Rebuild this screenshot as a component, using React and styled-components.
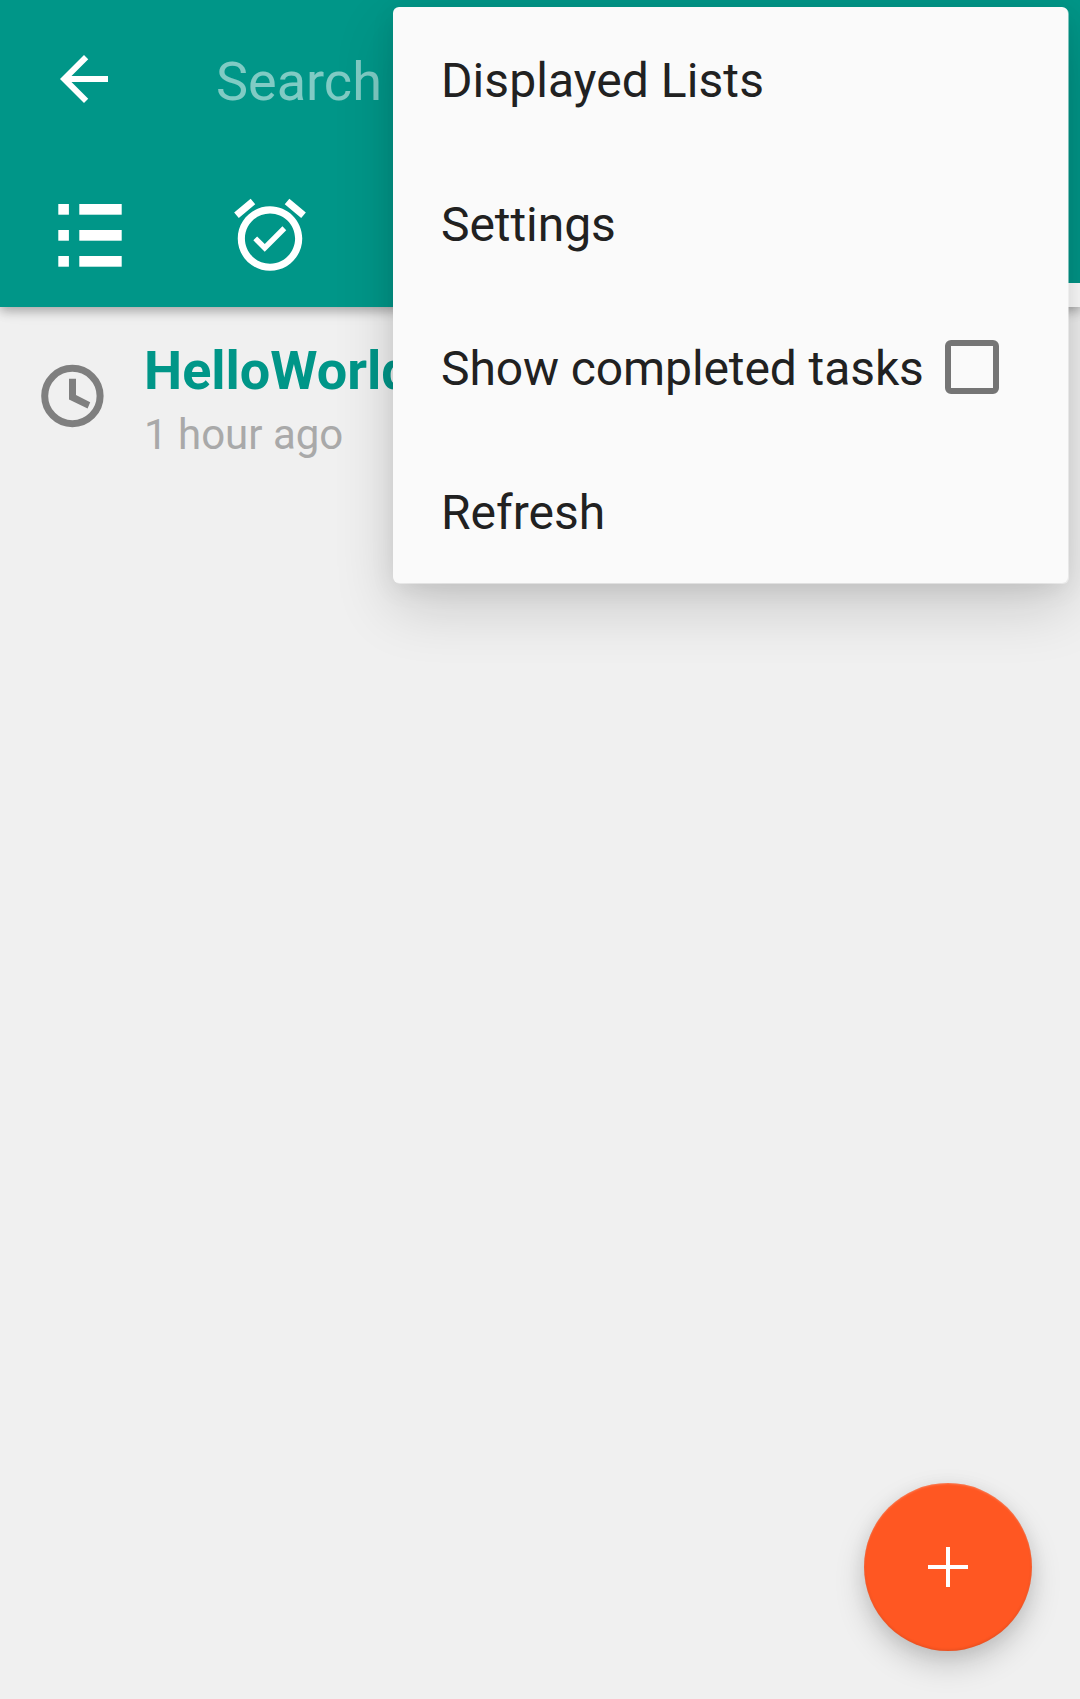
import React from "react";
import styled, { createGlobalStyle } from "styled-components";

const GlobalStyle = createGlobalStyle`
  * { box-sizing: border-box; }
  body {
    margin: 0;
    background: #f0f0f0;
    font-family: Roboto, "Noto Sans", sans-serif;
  }
`;

const Screen = styled.div`
  position: relative;
  width: 1080px;
  height: 1699px;
  overflow: hidden;
  background: #f0f0f0;
`;

const Header = styled.header`
  position: relative;
  height: 307px;
  background: #009688;
  box-shadow: 0 4px 10px rgba(0, 0, 0, 0.28), 0 2px 20px rgba(0, 0, 0, 0.06);
`;

const Toolbar = styled.div`
  display: flex;
  align-items: center;
  gap: 96px;
  height: 163px;
  padding: 0 48px 5px;
`;

const SearchHint = styled.span`
  padding-top: 5px;
  font-size: 54px;
  line-height: 64px;
  color: rgba(255, 255, 255, 0.5);
`;

const Tabs = styled.nav`
  display: flex;
  height: 144px;
`;

const Tab = styled.div`
  display: flex;
  align-items: center;
  justify-content: center;
  width: 180px;
  box-shadow: ${(p) => (p.$active ? "inset 0 -24px 0 #fff" : "none")};
`;

const Icon = styled.svg`
  display: block;
  flex: none;
  width: ${(p) => p.$size}px;
  height: ${(p) => p.$size}px;
`;

const TaskRow = styled.div`
  display: flex;
  align-items: center;
  gap: 36px;
  height: 178px;
  padding-left: 36px;
`;

const TaskText = styled.div`
  display: flex;
  flex-direction: column;
  padding-top: 7px;
`;

const TaskTitle = styled.div`
  font-size: 54px;
  line-height: 64px;
  font-weight: 700;
  color: #009688;
`;

const TaskTime = styled.div`
  padding-top: 7px;
  font-size: 42px;
  line-height: 50px;
  color: #a9a9a9;
`;

const Menu = styled.div`
  position: absolute;
  top: 7px;
  left: 393px;
  width: 675px;
  border-radius: 6px;
  background: #fafafa;
  box-shadow: 1px 1px 0 rgba(250, 250, 250, 0.5),
    0 24px 60px rgba(0, 0, 0, 0.16), 0 6px 24px rgba(0, 0, 0, 0.08);
`;

const MenuItem = styled.div`
  display: flex;
  align-items: center;
  height: 144px;
  padding: 0 69px 0 48px;
  justify-content: space-between;
`;

const MenuLabel = styled.span`
  padding-top: 3px;
  font-size: 48px;
  line-height: 56px;
  letter-spacing: ${(p) => p.$tracking || 0}px;
  white-space: nowrap;
  color: #212121;
`;

const Checkbox = styled.span`
  width: 54px;
  height: 54px;
  border: 6px solid #757575;
  border-radius: 6px;
`;

const Fab = styled.button`
  position: absolute;
  right: 48px;
  bottom: 48px;
  display: flex;
  align-items: center;
  justify-content: center;
  width: 168px;
  height: 168px;
  padding: 0;
  border: 0;
  border-radius: 50%;
  background: #ff5722;
  box-shadow: 0 14px 30px rgba(0, 0, 0, 0.17), 0 4px 18px rgba(0, 0, 0, 0.08),
    inset 0 1px 2px rgba(255, 255, 255, 0.25), inset 0 -1px 3px rgba(0, 0, 0, 0.12);
`;

const BackIcon = () => (
  <Icon $size={72} viewBox="0 0 24 24" fill="#fff">
    <path d="M20 11H7.83l5.59-5.59L12 4l-8 8 8 8 1.41-1.41L7.83 13H20v-2z" />
  </Icon>
);

const ListIcon = () => (
  <Icon $size={64} viewBox="0 0 64 64" fill="#fff">
    {[1, 27, 53].map((y) => (
      <React.Fragment key={y}>
        <rect x="0.3" y={y} width="10.6" height="10.7" />
        <rect x="21.3" y={y} width="42.4" height="10.7" />
      </React.Fragment>
    ))}
  </Icon>
);

const AlarmIcon = () => (
  <Icon $size={86} viewBox="0 0 24 24" fill="#fff">
    <path d="M22 5.72l-4.6-3.86-1.29 1.53 4.6 3.86L22 5.72zM7.88 3.39L6.6 1.86 2 5.71l1.29 1.53 4.59-3.85zM12 4c-4.97 0-9 4.03-9 9s4.02 9 9 9c4.97 0 9-4.03 9-9s-4.03-9-9-9zm0 16c-3.87 0-7-3.13-7-7s3.13-7 7-7 7 3.13 7 7-3.13 7-7 7zM10.54 14.53L8.41 12.4l-1.06 1.06 3.18 3.18 6-6-1.06-1.06-4.93 4.95z" />
  </Icon>
);

const ClockIcon = () => (
  <Icon $size={72} viewBox="0 0 72 72" fill="none" stroke="#7f7f7f">
    <circle cx="36.4" cy="36" r="27.7" strokeWidth="7" />
    <path d="M33 18.7h7v16.2l14.2 7.3-2.6 6.2L33 39.5z" fill="#7f7f7f" stroke="none" />
  </Icon>
);

const PlusIcon = () => (
  <Icon $size={40} viewBox="0 0 40 40" fill="#fff">
    <path d="M18 0h4v18h18v4H22v18h-4V22H0v-4h18z" />
  </Icon>
);

const menuItems = [
  { label: "Displayed Lists", tracking: 0.07 },
  { label: "Settings", tracking: -0.06 },
  { label: "Show completed tasks", tracking: -0.1, checkbox: true },
  { label: "Refresh" },
];

export default function App() {
  return (
    <Screen>
      <GlobalStyle />
      <Header>
        <Toolbar>
          <BackIcon />
          <SearchHint>Search</SearchHint>
        </Toolbar>
        <Tabs>
          <Tab><ListIcon /></Tab>
          <Tab><AlarmIcon /></Tab>
          <Tab />
          <Tab />
          <Tab />
          <Tab $active />
        </Tabs>
      </Header>
      <TaskRow>
        <ClockIcon />
        <TaskText>
          <TaskTitle>HelloWorld</TaskTitle>
          <TaskTime>1 hour ago</TaskTime>
        </TaskText>
      </TaskRow>
      <Menu>
        {menuItems.map((item) => (
          <MenuItem key={item.label}>
            <MenuLabel $tracking={item.tracking}>{item.label}</MenuLabel>
            {item.checkbox && <Checkbox />}
          </MenuItem>
        ))}
      </Menu>
      <Fab aria-label="Add task"><PlusIcon /></Fab>
    </Screen>
  );
}
